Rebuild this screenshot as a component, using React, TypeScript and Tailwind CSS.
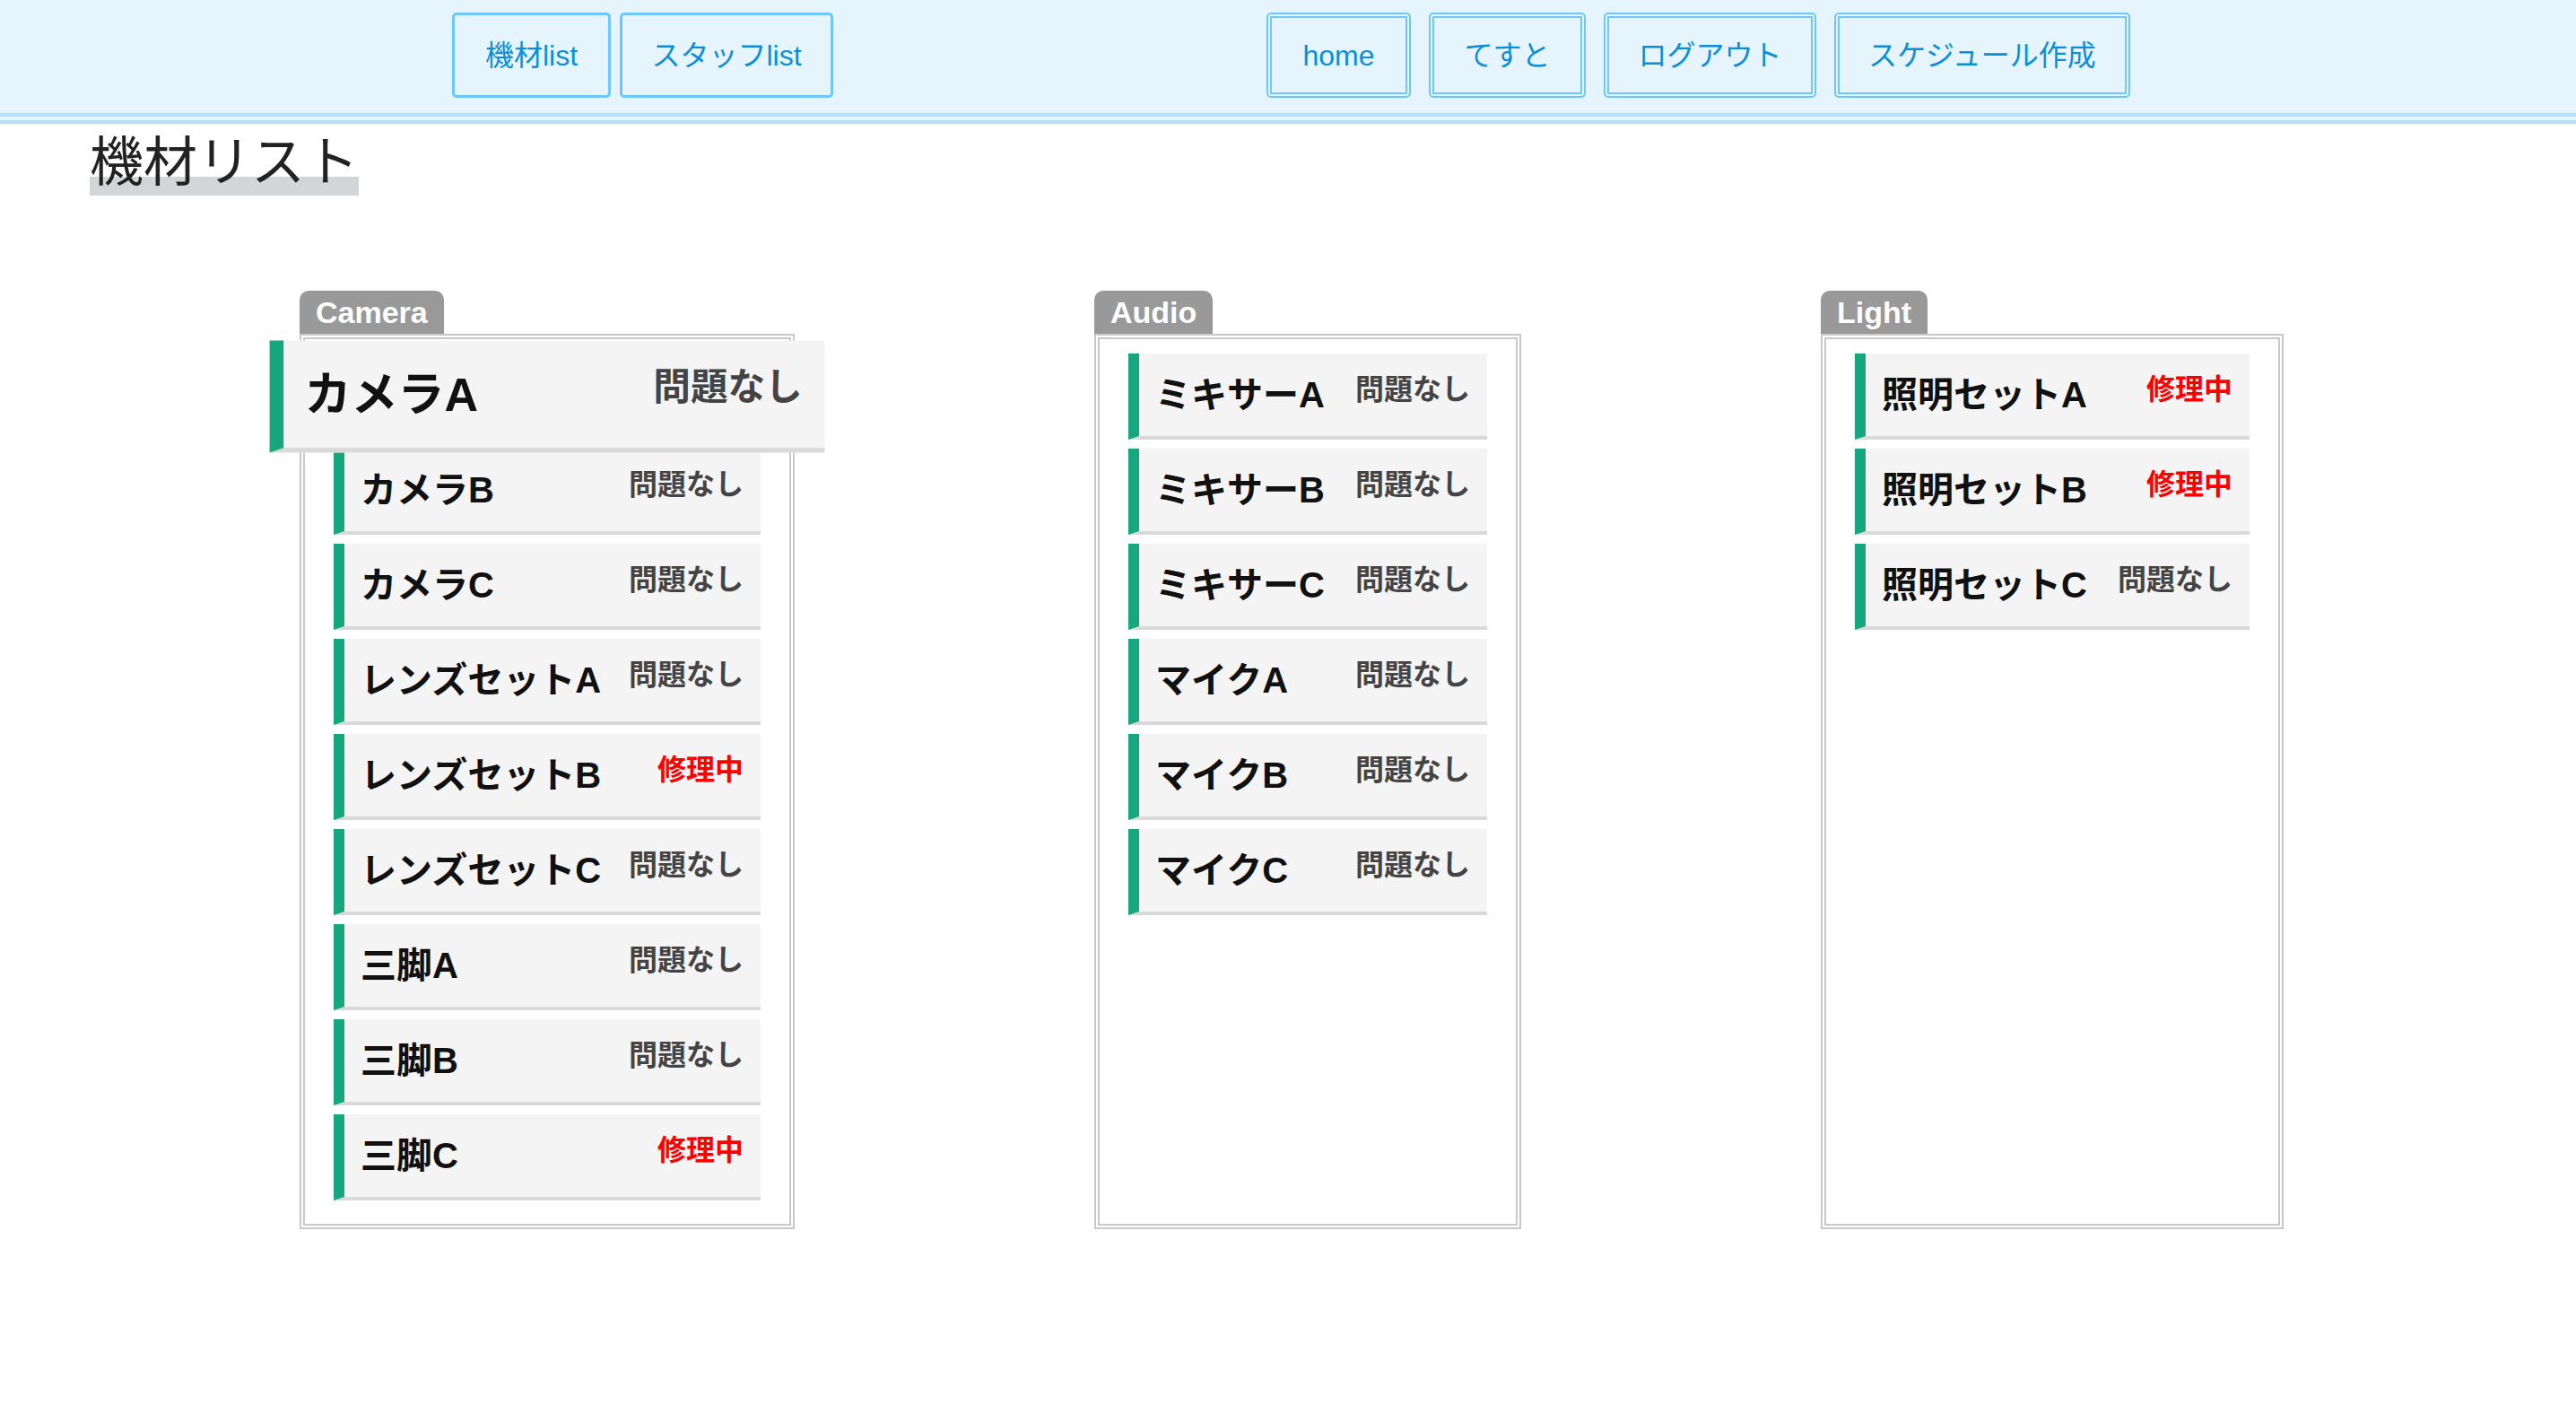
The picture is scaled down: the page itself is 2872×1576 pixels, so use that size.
import React from "react";

type Item = { name: string; status: string; big?: boolean };

const FONT = { fontFamily: '"Liberation Sans", "Noto Sans CJK JP", sans-serif' };

const groups: { label: string; width: string; items: Item[] }[] = [
  {
    label: "Camera",
    width: "w-[476px]",
    items: [
      { name: "カメラA", status: "問題なし", big: true },
      { name: "カメラB", status: "問題なし" },
      { name: "カメラC", status: "問題なし" },
      { name: "レンズセットA", status: "問題なし" },
      { name: "レンズセットB", status: "修理中" },
      { name: "レンズセットC", status: "問題なし" },
      { name: "三脚A", status: "問題なし" },
      { name: "三脚B", status: "問題なし" },
      { name: "三脚C", status: "修理中" },
    ],
  },
  {
    label: "Audio",
    width: "w-[400px]",
    items: [
      { name: "ミキサーA", status: "問題なし" },
      { name: "ミキサーB", status: "問題なし" },
      { name: "ミキサーC", status: "問題なし" },
      { name: "マイクA", status: "問題なし" },
      { name: "マイクB", status: "問題なし" },
      { name: "マイクC", status: "問題なし" },
    ],
  },
  {
    label: "Light",
    width: "w-[440px]",
    items: [
      { name: "照明セットA", status: "修理中" },
      { name: "照明セットB", status: "修理中" },
      { name: "照明セットC", status: "問題なし" },
    ],
  },
];

function Row({ item, width }: { item: Item; width: string }) {
  const repair = item.status === "修理中";
  return (
    <div
      className={`${width} ${item.big ? "scale-[1.3]" : ""} mb-[10px] flex h-[96px] items-start justify-between border-b-4 border-l-[12px] border-b-[#d9d9d9] border-l-[#16a77e] bg-[#f4f4f4] pl-[18px] pr-[19px] pt-[15px]`}
    >
      <span className="whitespace-nowrap text-[40px] font-bold leading-[62px] text-[#111111]">{item.name}</span>
      <span
        className={`whitespace-nowrap text-[32px] font-bold leading-[51px] ${repair ? "text-[#ff0000]" : "text-[#444444]"}`}
      >
        {item.status}
      </span>
    </div>
  );
}

function SingleBtn({ label, w }: { label: string; w: string }) {
  return (
    <button
      className={`${w} flex h-[95px] items-center justify-center rounded-[5px] border-[3px] border-[#6cc7fb] bg-[#e6f5fd] text-[32px] font-normal text-[#0b8fd9]`}
    >
      {label}
    </button>
  );
}

function DoubleBtn({ label, w }: { label: string; w: string }) {
  return (
    <button
      className={`${w} flex h-[95px] items-center justify-center rounded-[5px] border-[6px] border-double border-[#6cc7fb] bg-[#e6f5fd] text-[32px] font-normal text-[#0b8fd9]`}
    >
      {label}
    </button>
  );
}

export default function App() {
  return (
    <div className="min-h-screen bg-white" style={FONT}>
      <header className="flex h-[138px] items-start border-b-[12px] border-double border-b-[#b5e0f8] bg-[#e6f5fd] pl-[504px] pt-[14px]">
        <div className="flex gap-[10px]">
          <SingleBtn label="機材list" w="w-[177px]" />
          <SingleBtn label="スタッフlist" w="w-[238px]" />
        </div>
        <div className="ml-[483px] flex gap-[20px]">
          <DoubleBtn label="home" w="w-[161px]" />
          <DoubleBtn label="てすと" w="w-[175px]" />
          <DoubleBtn label="ログアウト" w="w-[237px]" />
          <DoubleBtn label="スケジュール作成" w="w-[330px]" />
        </div>
      </header>

      <div className="ml-[100px] mt-[8px]">
        <h1 className="inline-block bg-[linear-gradient(transparent_71%,#d3d6d7_71%)] text-[60px] font-normal leading-[72px] text-[#222222]">
          機材リスト
        </h1>
      </div>

      <div className="mt-[106px] flex items-stretch gap-[334px] pl-[334px]">
        {groups.map((g) => (
          <div key={g.label} className="flex flex-col">
            <div className="self-start rounded-t-[10px] bg-[#999999] px-[18px] text-[34px] font-bold leading-[48px] text-white">
              {g.label}
            </div>
            <div className="flex-1 border-[6px] border-double border-[#c8c8c8] px-[32px] py-[16px]">
              {g.items.map((it) => (
                <Row key={it.name} item={it} width={g.width} />
              ))}
            </div>
          </div>
        ))}
      </div>
    </div>
  );
}
